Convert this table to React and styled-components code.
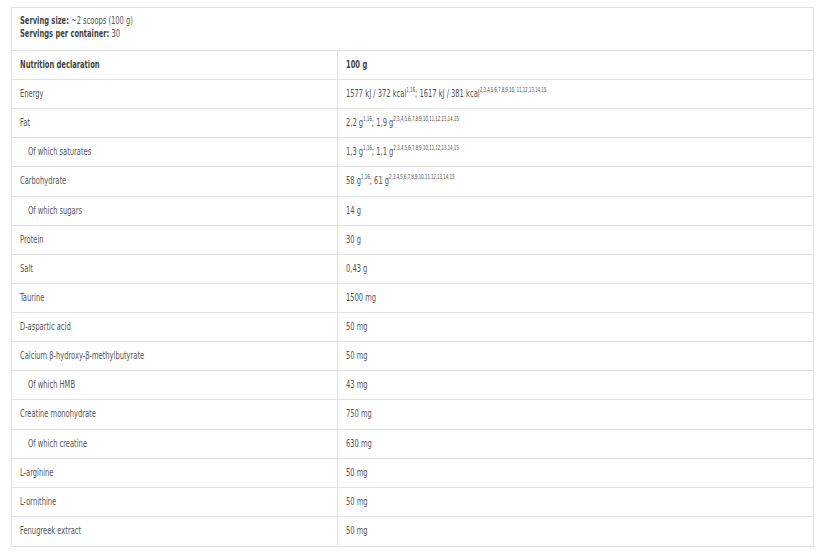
import React from 'react';
import styled, { createGlobalStyle } from 'styled-components';

const GlobalStyle = createGlobalStyle`
  body {
    margin: 0;
    background: #fff;
    font-family: 'DejaVu Sans Condensed', 'DejaVu Sans', sans-serif;
    font-stretch: condensed;
  }
`;

const Page = styled.div`
  padding: 7px 16px 0 11px;
`;

const Table = styled.div`
  width: 801px;
  border: 1px solid #e2e2e2;
  color: #555;
  font-size: 11px;
`;

// the reference face is a very narrow display font; squeeze the condensed one to match
const Narrow = styled.span`
  display: inline-block;
  white-space: nowrap;
  transform: scaleX(0.68);
  transform-origin: left center;
`;

const Intro = styled.div`
  height: 43px;
  padding: 6px 8px 0;
  box-sizing: border-box;
  line-height: 13px;
  border-bottom: 1px solid #e2e2e2;
  b {
    font-weight: 700;
    color: #444;
  }
`;

const Row = styled.div`
  display: grid;
  grid-template-columns: 325px 1fr;
  height: ${(p) => (p.tall ? 30 : 29)}px;
  box-sizing: border-box;
  border-bottom: ${(p) => (p.last ? 'none' : '1px solid #e2e2e2')};
  font-weight: ${(p) => (p.head ? 700 : 400)};
  color: ${(p) => (p.head ? '#444' : '#555')};
`;

const Cell = styled.div`
  display: flex;
  align-items: center;
  padding-left: ${(p) => (p.indent ? 16 : 8)}px;
  padding-bottom: 2px;
  border-left: ${(p) => (p.value ? '1px solid #e2e2e2' : 'none')};
  white-space: nowrap;
  sup {
    font-size: 7px;
    letter-spacing: -0.3px;
    vertical-align: 5px;
    line-height: 0;
  }
`;

const rows = [
  { name: 'Energy', value: <>1577 kJ / 372 kcal<sup>1,16</sup>; 1617 kJ / 381 kcal<sup>2,3,4,5,6,7,8,9,10, 11,12,13,14,15</sup></> },
  { name: 'Fat', value: <>2,2 g<sup>1,16</sup>; 1,9 g<sup>2,3,4,5,6,7,8,9,10,11,12,13,14,15</sup></> },
  { name: 'Of which saturates', indent: true, value: <>1,3 g<sup>1,16</sup>; 1,1 g<sup>2,3,4,5,6,7,8,9,10,11,12,13,14,15</sup></> },
  { name: 'Carbohydrate', value: <>58 g<sup>1,16</sup>; 61 g<sup>2,3,4,5,6,7,8,9,10,11,12,13,14,15</sup></> },
  { name: 'Of which sugars', indent: true, value: '14 g' },
  { name: 'Protein', value: '30 g' },
  { name: 'Salt', value: '0,43 g' },
  { name: 'Taurine', value: '1500 mg' },
  { name: 'D-aspartic acid', value: '50 mg' },
  { name: 'Calcium β-hydroxy-β-methylbutyrate', value: '50 mg' },
  { name: 'Of which HMB', indent: true, value: '43 mg' },
  { name: 'Creatine monohydrate', value: '750 mg' },
  { name: 'Of which creatine', indent: true, value: '630 mg' },
  { name: 'L-arginine', value: '50 mg' },
  { name: 'L-ornithine', value: '50 mg' },
  { name: 'Fenugreek extract', value: '50 mg' },
];

export default function App() {
  return (
    <Page>
      <GlobalStyle />
      <Table>
        <Intro>
          <div><Narrow><b>Serving size:</b> ~2 scoops (100 g)</Narrow></div>
          <div><Narrow><b>Servings per container:</b> 30</Narrow></div>
        </Intro>
        <Row head>
          <Cell><Narrow>Nutrition declaration</Narrow></Cell>
          <Cell value><Narrow>100 g</Narrow></Cell>
        </Row>
        {rows.map((r, i) => (
          <Row key={r.name} last={i === rows.length - 1} tall={i % 8 === 3}>
            <Cell indent={r.indent}><Narrow>{r.name}</Narrow></Cell>
            <Cell value><Narrow>{r.value}</Narrow></Cell>
          </Row>
        ))}
      </Table>
    </Page>
  );
}
